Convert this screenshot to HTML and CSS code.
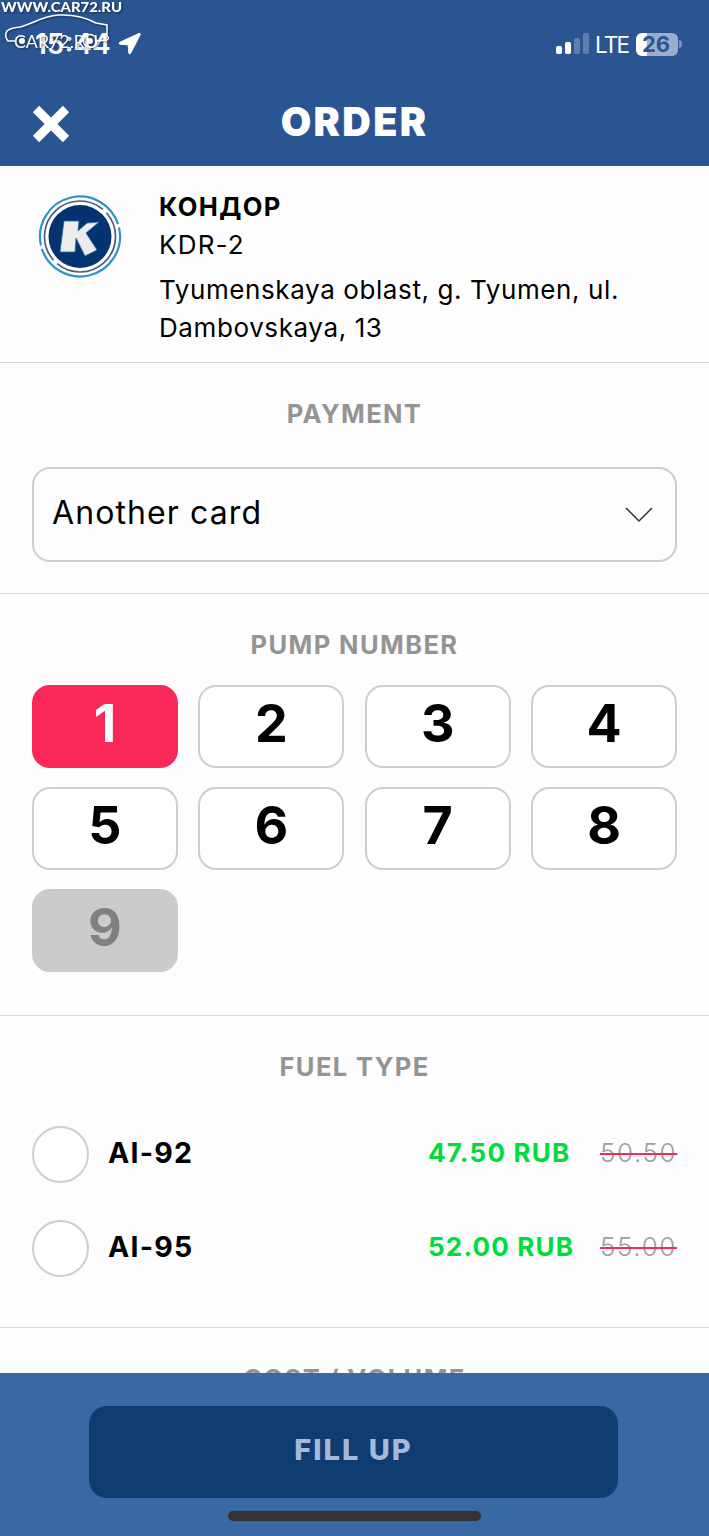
FILE: index.html
```html
<!DOCTYPE html>
<html lang="en">
<head>
    <meta charset="UTF-8">
    <meta name="viewport" content="width=device-width, initial-scale=1.0">
    <title>Order</title>
    <link rel="stylesheet" href="styles.css">
</head>
<body>
    <div class="screen">
        <header class="header">
            <div class="status-bar">
                <span class="time">15:44</span>
                <svg class="location-icon" width="24" height="24" viewBox="0 0 24 24">
                    <path d="M21 1.5 2 10.2q-2 1.3 0 2l8.2.6.6 8.2q.8 2 2 0L22.3 2.5q.2-1.6-1.3-1z" fill="#fff" stroke="#fff" stroke-linejoin="round"/>
                </svg>
                <div class="status-right">
                    <svg class="signal-icon" width="33" height="22" viewBox="0 0 33 22">
                        <rect x="0" y="13" width="6" height="8" rx="1.8" fill="#fff"/>
                        <rect x="9" y="9" width="6" height="12" rx="1.8" fill="#fff"/>
                        <rect x="18" y="5" width="6" height="16" rx="1.8" fill="#5d7eae"/>
                        <rect x="27" y="0" width="6" height="21" rx="1.8" fill="#5d7eae"/>
                    </svg>
                    <span class="network">LTE</span>
                    <div class="battery"><span>26</span></div>
                    <div class="battery-cap"></div>
                </div>
            </div>
            <div class="title-bar">
                <svg class="close-icon" width="38" height="38" viewBox="0 0 38 38">
                    <path d="M4 4 34 34M34 4 4 34" stroke="#fff" stroke-width="9"/>
                </svg>
                <h1>ORDER</h1>
            </div>
        </header>

        <main>
            <section class="station">
                <svg class="station-logo" width="84" height="86" viewBox="0 0 84 86">
                    <circle cx="42" cy="43.5" r="31.5" fill="#053370"/>
                    <circle cx="42" cy="43.5" r="35.5" fill="none" stroke="#51597c" stroke-width="1.7" pathLength="360" stroke-dasharray="172 8" transform="rotate(-42 42 43.5)"/>
                    <circle cx="42" cy="43.5" r="40" fill="none" stroke="#2d94c6" stroke-width="2.2" pathLength="360" stroke-dasharray="175 5" transform="rotate(-13 42 43.5)"/>
                    <path d="M26 28h15l-1 10 9-8 12-1-13 11 11 17-12 6-9-18-1 14H22z" fill="#ececed" stroke="#2b6ca3" stroke-width=".8"/>
                </svg>
                <div class="station-info">
                    <h2>КОНДОР</h2>
                    <p class="station-code">KDR-2</p>
                    <p class="address">Tyumenskaya oblast, g. Tyumen, ul.<br>Dambovskaya, 13</p>
                </div>
            </section>

            <section class="section payment">
                <h3 class="section-title">PAYMENT</h3>
                <div class="select">
                    <span>Another card</span>
                    <svg width="28" height="16" viewBox="0 0 28 16">
                        <path d="M1 1 14 14 27 1" fill="none" stroke="#333" stroke-width="1.5"/>
                    </svg>
                </div>
            </section>

            <section class="section pumps">
                <h3 class="section-title">PUMP NUMBER</h3>
                <div class="pump-grid">
                    <button class="pump active">1</button>
                    <button class="pump">2</button>
                    <button class="pump">3</button>
                    <button class="pump">4</button>
                    <button class="pump">5</button>
                    <button class="pump">6</button>
                    <button class="pump">7</button>
                    <button class="pump">8</button>
                    <button class="pump disabled">9</button>
                </div>
            </section>

            <section class="section fuel">
                <h3 class="section-title">FUEL TYPE</h3>
                <div class="fuel-row">
                    <span class="radio"></span>
                    <span class="fuel-name">AI-92</span>
                    <span class="price">47.50 RUB</span>
                    <span class="old-price">50.50</span>
                </div>
                <div class="fuel-row">
                    <span class="radio"></span>
                    <span class="fuel-name">AI-95</span>
                    <span class="price">52.00 RUB</span>
                    <span class="old-price">55.00</span>
                </div>
            </section>

            <section class="section cost">
                <h3 class="section-title">COST / VOLUME</h3>
            </section>
        </main>

        <footer class="footer">
            <button class="fill-btn">FILL UP</button>
            <div class="home-indicator"></div>
        </footer>

        <svg class="watermark" width="130" height="56" viewBox="0 0 130 56">
            <text class="wm-url" x="1" y="11.5" textLength="121" lengthAdjust="spacingAndGlyphs">WWW.CAR72.RU</text>
            <path d="M15 41H8Q4 36 7 31Q10 28 20 27C33 24 42 16 58 15Q80 14 96 23L107 25V36Q110 38 107 40L97 41" fill="none" stroke="#fff" stroke-width="1.5"/>
            <circle cx="22" cy="41" r="3" fill="#fff"/>
            <circle cx="90" cy="41" r="6.5" fill="none" stroke="#fff" stroke-width="1.3"/>
            <circle cx="90" cy="41" r="3" fill="#fff"/>
            <text class="wm-name" x="14" y="47.5" textLength="84" lengthAdjust="spacingAndGlyphs">CAR72.RU</text>
        </svg>
    </div>
</body>
</html>
```
FILE: styles.css
```css
:root {
    --header-color: #2b5592;
    --footer-color: #3869a4;
    --button-color: #0e3d72;
    --accent: #fa2858;
    --green: #00dc3c;
    --border-color: #cecece;
    --text-secondary: #949494;
}

* {
    box-sizing: border-box;
    margin: 0;
    padding: 0;
}

body {
    font-family: Inter, 'Open Sans', sans-serif;
    color: #000;
    background-color: #fdfdfd;
}

button {
    font-family: inherit;
}

.screen {
    position: relative;
    height: 1536px;
    display: flex;
    flex-direction: column;
    overflow: hidden;
}

.header {
    flex: none;
    height: 166px;
    background-color: var(--header-color);
    color: #fff;
}

.status-bar {
    height: 88px;
    display: flex;
    align-items: center;
    padding: 0 27px 0 35px;
}

.time {
    width: 75px;
    font-size: 28px;
    font-weight: 600;
    white-space: nowrap;
}

.location-icon {
    margin-left: 8px;
}

.status-right {
    margin-left: auto;
    display: flex;
    align-items: center;
}

.network {
    width: 33px;
    margin: 0 8px 0 6px;
    font-size: 22.5px;
    letter-spacing: -1.8px;
}

.battery {
    width: 42px;
    height: 23px;
    border-radius: 6px;
    background: linear-gradient(to right, #fff 11px, #9badcb 11px);
    color: var(--header-color);
    font-size: 22px;
    font-weight: 700;
    line-height: 23px;
    text-align: center;
}

.battery span {
    margin-right: 2px;
}

.battery-cap {
    width: 3px;
    height: 8px;
    margin-left: 1px;
    border-radius: 0 4px 4px 0;
    background-color: #7a93ba;
}

.title-bar {
    height: 70px;
    display: grid;
    grid-template-columns: 38px 1fr 38px;
    align-items: center;
    padding: 0 32px;
}

.close-icon {
    margin-top: 2px;
}

h1 {
    margin-bottom: 2px;
    text-align: center;
    font-size: 39.5px;
    font-weight: 900;
    line-height: 68px;
    letter-spacing: 2.3px;
}

main {
    flex: 1;
    min-height: 0;
    overflow: hidden;
}

.station {
    height: 197px;
    display: flex;
    padding: 22px 32px 0 38px;
    border-bottom: 1px solid #d6d6d6;
}

.station-logo {
    flex: none;
    margin-top: 5px;
}

.station-info {
    margin-left: 37px;
    font-size: 26px;
    line-height: 38px;
    white-space: nowrap;
}

h2 {
    font-size: 25.5px;
    font-weight: 700;
    letter-spacing: 1.4px;
}

.station-code {
    letter-spacing: 1.2px;
}

.address {
    margin-top: 7px;
    letter-spacing: 0.6px;
}

.section {
    padding: 32px 32px 0;
    border-bottom: 1px solid #d6d6d6;
}

.payment {
    height: 231px;
}

.pumps {
    height: 422px;
}

.fuel {
    height: 312px;
}

.section-title {
    font-size: 25.5px;
    font-weight: 700;
    line-height: 38px;
    letter-spacing: 1.4px;
    text-align: center;
    color: var(--text-secondary);
}

.select {
    height: 95px;
    margin-top: 34px;
    padding: 0 22px 4px 18px;
    display: flex;
    align-items: center;
    justify-content: space-between;
    border: 2px solid var(--border-color);
    border-radius: 18px;
    font-size: 32px;
    letter-spacing: 1.1px;
}

.select svg {
    margin-top: 4px;
}

.pump-grid {
    display: grid;
    grid-template-columns: repeat(4, 1fr);
    grid-auto-rows: 83px;
    gap: 19px 20.5px;
    margin-top: 21px;
}

.pump {
    padding-bottom: 5px;
    border: 2px solid var(--border-color);
    border-radius: 18px;
    background-color: #fff;
    color: #000;
    font-size: 52px;
    font-weight: 700;
    line-height: 74px;
}

.pump.active {
    border-color: var(--accent);
    background-color: var(--accent);
    color: #fff;
}

.pump.disabled {
    background-color: #cbcbcb;
    border-color: #cbcbcb;
    color: #808080;
}

.fuel-row {
    height: 57px;
    margin-top: 40px;
    display: flex;
    align-items: center;
    line-height: 54px;
}

.fuel-row + .fuel-row {
    margin-top: 37px;
}

.radio {
    width: 57px;
    height: 57px;
    border: 2px solid var(--border-color);
    border-radius: 50%;
    background-color: #fff;
}

.fuel-name {
    margin: 0 auto 3px 19px;
    font-size: 28.5px;
    font-weight: 700;
    letter-spacing: 1.2px;
}

.price {
    width: 145px;
    margin-bottom: 3px;
    font-size: 26px;
    font-weight: 700;
    letter-spacing: 1.2px;
    color: var(--green);
    white-space: nowrap;
}

.old-price {
    width: 77px;
    margin: 0 0 3px 27px;
    font-size: 26px;
    font-weight: 300;
    letter-spacing: 1.6px;
    color: #a0a0a0;
    text-decoration: line-through;
    text-decoration-color: var(--accent);
    text-decoration-thickness: 2px;
}

.cost {
    border-bottom: none;
}

.footer {
    flex: none;
    height: 163px;
    padding-top: 33px;
    display: flex;
    flex-direction: column;
    align-items: center;
    background-color: var(--footer-color);
}

.fill-btn {
    width: 529px;
    height: 92px;
    margin-right: 2px;
    padding-bottom: 5px;
    border: none;
    border-radius: 18px;
    background-color: var(--button-color);
    color: #a8b8d8;
    font-size: 29px;
    font-weight: 800;
    letter-spacing: 2px;
}

.home-indicator {
    width: 253px;
    height: 10px;
    margin-top: 13px;
    border-radius: 5px;
    background-color: #333;
}

/* site mark laid over the status bar */
.watermark {
    position: absolute;
    top: 0;
    left: 0;
    fill: #fff;
    filter: drop-shadow(1px 1px 1px rgba(0, 0, 0, 0.5));
}

.wm-url {
    font: 900 14px Lato, sans-serif;
}

.wm-name {
    font: 400 17px Lato, sans-serif;
}
```
